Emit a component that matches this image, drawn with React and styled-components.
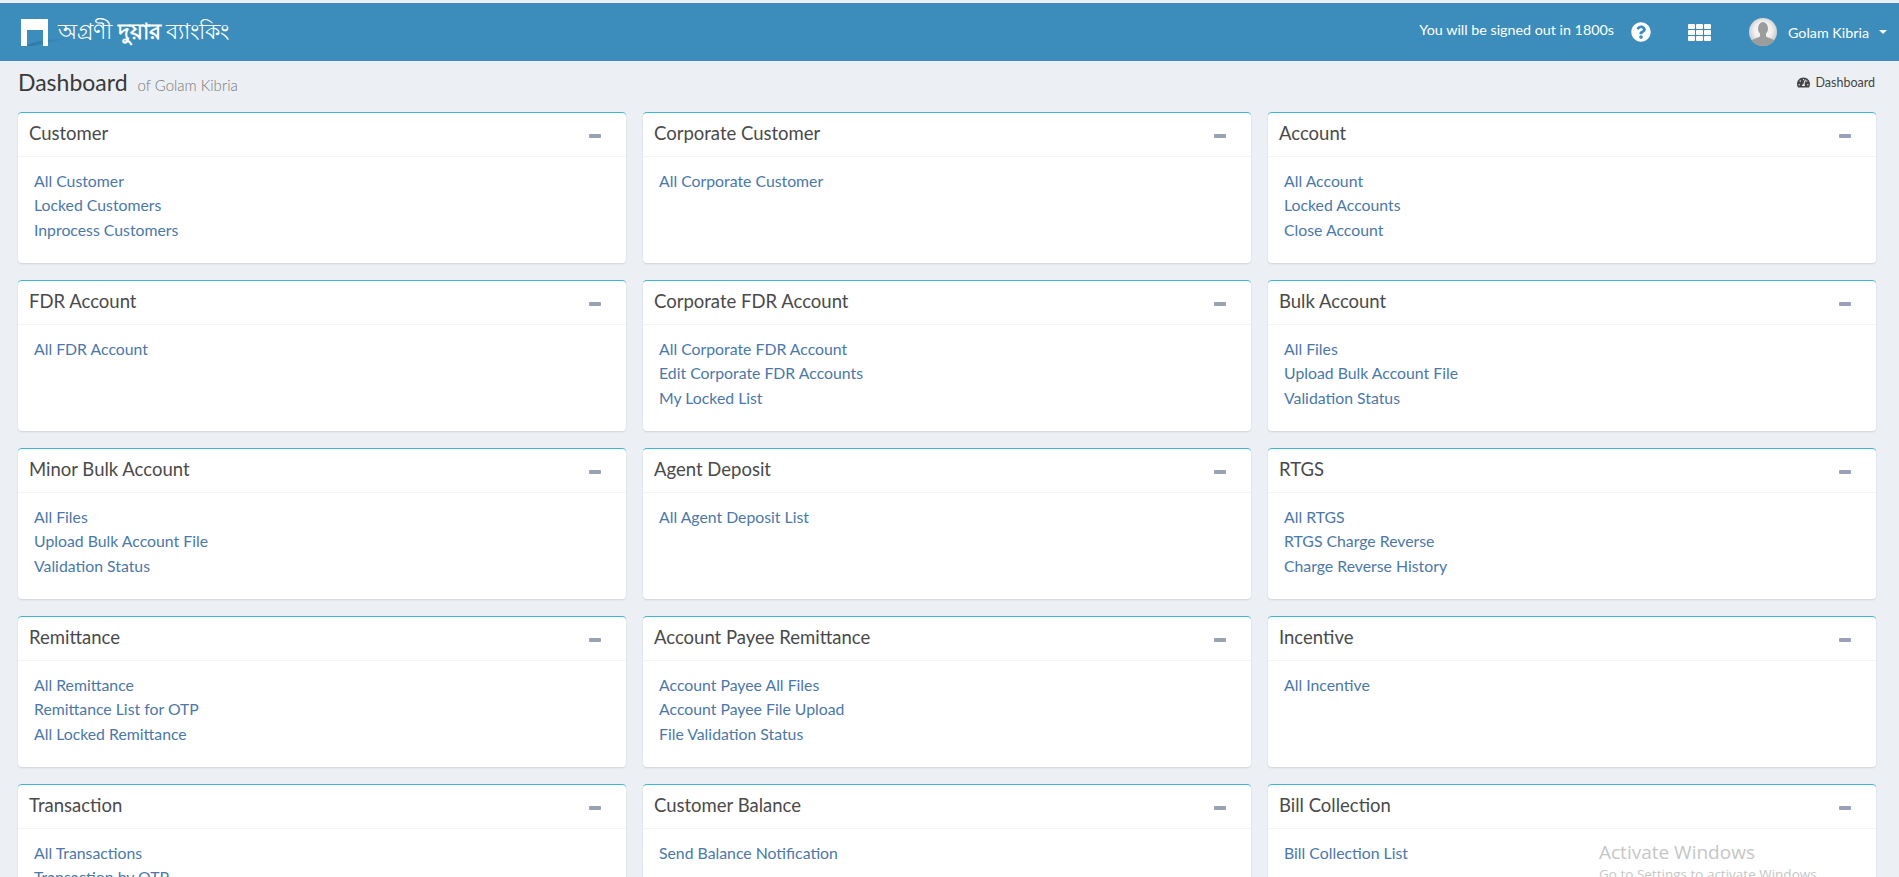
import React from "react";
import styled, { createGlobalStyle } from "styled-components";
import { FaQuestionCircle, FaTachometerAlt } from "react-icons/fa";

const GlobalStyle = createGlobalStyle`
  html, body {
    margin: 0;
    height: 100%;
    overflow: hidden;
    background: #ecf0f5;
    font-family: "Lato", "Noto Sans", sans-serif;
  }
`;

const Page = styled.div`
  height: 877px;
  overflow: hidden;
  position: relative;
  padding-top: 3px;
  box-sizing: border-box;
`;

const TopBar = styled.header`
  height: 58px;
  background: #3c8dbc;
  color: #fff;
  display: flex;
  align-items: center;
  padding: 0 12px 0 21px;
`;

const Brand = styled.div`
  display: flex;
  align-items: center;
  gap: 10px;
  font-size: 22.3px;
  flex: 1;
`;

const LogoMark = styled.svg`
  overflow: visible;
  flex: none;
`;

const Timer = styled.span`
  font-size: 14.3px;
  margin: 0 17px 6px 0;
`;

const TopIcon = styled.span`
  display: flex;
  font-size: 20px;
  margin-right: 37px;
`;

const GridIcon = styled.svg`
  width: 23px;
  height: 17px;
  margin-right: 38px;
`;

const Avatar = styled.svg`
  width: 28px;
  height: 28px;
  border-radius: 50%;
  margin-right: 11px;
`;

const UserName = styled.span`
  font-size: 14.3px;
  margin-right: 10px;
`;

const Caret = styled.span`
  border-left: 4px solid transparent;
  border-right: 4px solid transparent;
  border-top: 4px solid #fff;
`;

const ContentHead = styled.div`
  display: flex;
  align-items: center;
  justify-content: space-between;
  height: 51px;
  box-sizing: border-box;
  padding: 0 24px 9px 18px;
`;

const Title = styled.h1`
  margin: 0;
  font-size: 23px;
  font-weight: 400;
  color: #3a3a3a;
  span {
    font-size: 15px;
    font-weight: 300;
    color: #777;
    margin-left: 10px;
  }
`;

const Crumb = styled.div`
  display: flex;
  align-items: center;
  gap: 5px;
  font-size: 12.5px;
  color: #444;
  svg {
    font-size: 13px;
  }
`;

const Grid = styled.main`
  display: grid;
  grid-template-columns: repeat(3, 608px);
  gap: 17px;
  padding: 0 18px;
`;

const Card = styled.section`
  height: 151px;
  box-sizing: border-box;
  background: #fff;
  border-top: 1px solid #3fb3d6;
  border-radius: 4px;
  box-shadow: 0 1px 2px rgba(0, 0, 0, 0.12);
`;

const CardHead = styled.div`
  height: 44px;
  box-sizing: border-box;
  display: flex;
  align-items: center;
  justify-content: space-between;
  padding: 0 25px 4px 11px;
  border-bottom: 1px solid #f4f4f4;
`;

const CardTitle = styled.h3`
  margin: 0;
  font-size: 18.5px;
  font-weight: 400;
  color: #4a4a4a;
`;

const Collapse = styled.span`
  width: 12px;
  height: 4px;
  margin-top: 7px;
  border-radius: 1px;
  background: #9aa0b5;
`;

const Links = styled.div`
  display: flex;
  flex-direction: column;
  padding: 12px 16px;
`;

const Link = styled.a`
  font-size: 15.8px;
  line-height: 24.4px;
  color: #4b78a8;
`;

const Watermark = styled.div`
  position: absolute;
  left: 1599px;
  top: 839px;
  color: #c6c6c6;
  font-family: "Open Sans", sans-serif;
  font-size: 19px;
  white-space: nowrap;
  small {
    display: block;
    font-size: 13.5px;
  }
`;

const cards = [
  ["Customer", ["All Customer", "Locked Customers", "Inprocess Customers"]],
  ["Corporate Customer", ["All Corporate Customer"]],
  ["Account", ["All Account", "Locked Accounts", "Close Account"]],
  ["FDR Account", ["All FDR Account"]],
  ["Corporate FDR Account", ["All Corporate FDR Account", "Edit Corporate FDR Accounts", "My Locked List"]],
  ["Bulk Account", ["All Files", "Upload Bulk Account File", "Validation Status"]],
  ["Minor Bulk Account", ["All Files", "Upload Bulk Account File", "Validation Status"]],
  ["Agent Deposit", ["All Agent Deposit List"]],
  ["RTGS", ["All RTGS", "RTGS Charge Reverse", "Charge Reverse History"]],
  ["Remittance", ["All Remittance", "Remittance List for OTP", "All Locked Remittance"]],
  ["Account Payee Remittance", ["Account Payee All Files", "Account Payee File Upload", "File Validation Status"]],
  ["Incentive", ["All Incentive"]],
  ["Transaction", ["All Transactions", "Transaction by OTP"]],
  ["Customer Balance", ["Send Balance Notification"]],
  ["Bill Collection", ["Bill Collection List"]],
];

const Logo = () => (
  <LogoMark width="27" height="27" viewBox="0 0 27 27">
    <defs>
      <linearGradient id="swoosh" x1="0" y1="0" x2="1" y2="0">
        <stop offset="0" stopColor="#2f76a8" />
        <stop offset="1" stopColor="#3c8dbc" />
      </linearGradient>
    </defs>
    <path d="M5 27C12 22 30 20 50 19C36 22 20 25 12 27Z" fill="url(#swoosh)" />
    <path d="M0 0H27V27H22V11H6V27H0Z" fill="#fff" />
  </LogoMark>
);

const AppsIcon = () => (
  <GridIcon viewBox="0 0 23 17">
    {[0, 6, 12].flatMap((y) =>
      [0, 8, 16].map((x) => (
        <rect key={`${x}-${y}`} x={x} y={y} width="7" height="5" rx="1" fill="#fff" />
      ))
    )}
  </GridIcon>
);

export default function App() {
  return (
    <Page>
      <GlobalStyle />
      <TopBar>
        <Brand>
          <Logo />
          <span>অগ্রণী <b>দুয়ার</b> ব্যাংকিং</span>
        </Brand>
        <Timer>You will be signed out in 1800s</Timer>
        <TopIcon><FaQuestionCircle /></TopIcon>
        <AppsIcon />
        <Avatar viewBox="0 0 28 28">
          <defs>
            <radialGradient id="avatarBg" cx="0.5" cy="0.45" r="0.6">
              <stop offset="0.5" stopColor="#f2f2f2" />
              <stop offset="1" stopColor="#bdbdbd" />
            </radialGradient>
          </defs>
          <rect width="28" height="28" fill="url(#avatarBg)" />
          <ellipse cx="14" cy="10.5" rx="5" ry="6.5" fill="#9c9c9c" />
          <path d="M11 15H17V18.5L25 22V28H3V22L11 18.5Z" fill="#9c9c9c" />
        </Avatar>
        <UserName>Golam Kibria</UserName>
        <Caret />
      </TopBar>
      <ContentHead>
        <Title>Dashboard<span>of Golam Kibria</span></Title>
        <Crumb><FaTachometerAlt />Dashboard</Crumb>
      </ContentHead>
      <Grid>
        {cards.map(([title, links]) => (
          <Card key={title}>
            <CardHead>
              <CardTitle>{title}</CardTitle>
              <Collapse />
            </CardHead>
            <Links>
              {links.map((l) => <Link key={l}>{l}</Link>)}
            </Links>
          </Card>
        ))}
      </Grid>
      <Watermark>Activate Windows<small>Go to Settings to activate Windows.</small></Watermark>
    </Page>
  );
}
